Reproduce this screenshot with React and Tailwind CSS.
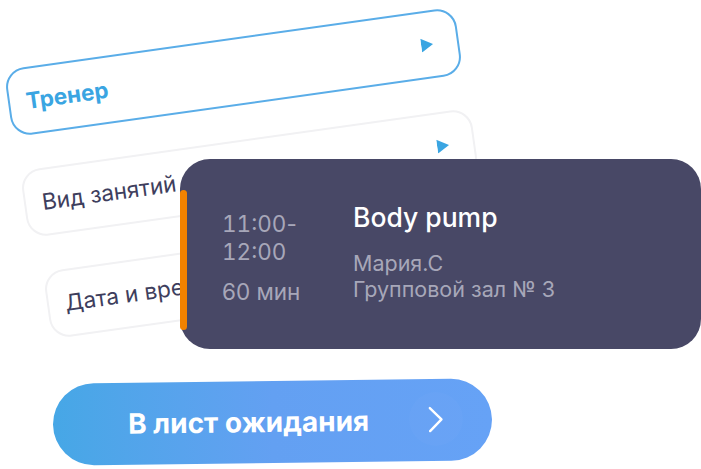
import React from 'react';

const filters = [
  { label: 'Тренер', active: true, ml: 'ml-[6px]' },
  { label: 'Вид занятий', active: false, ml: 'ml-[22px]' },
  { label: 'Дата и время', active: false, ml: 'ml-[45px]' },
];

const Triangle = () => (
  <svg width="12" height="14" viewBox="0 0 12 14" className="shrink-0">
    <path d="M0 0 L12 7 L0 14 Z" fill="#3aa5e2" />
  </svg>
);

const FilterCard = ({ label, active, ml }) => (
  <div
    className={`${ml} w-[455px] h-[68px] rotate-[-8deg] rounded-[20px] border-2 bg-white flex items-center justify-between pl-[16px] pr-[24px] ${
      active ? 'border-[#5aade8]' : 'border-[#f1f1f3]'
    }`}
  >
    <span
      className={
        active
          ? 'text-[22.5px] font-bold text-[#3aa5e2]'
          : 'text-[22.5px] font-normal text-[#3e3e5d]'
      }
    >
      {label}
    </span>
    <Triangle />
  </div>
);

const SessionCard = () => (
  <div className="absolute left-[180px] top-[159px] w-[521px] h-[190px] rounded-[30px] bg-[#484866]">
    <div className="absolute left-0 top-[31px] w-[7px] h-[140px] rounded-full bg-[#f28200]" />
    <div className="flex items-start pl-[42px] pt-[42px]">
      <div className="w-[131px] mt-[9px] text-[22.5px] text-[#a7a7b9]">
        <div className="leading-[28px]">
          <span className="tabular-nums">11:00</span>-
        </div>
        <div className="leading-[28px] tabular-nums">12:00</div>
        <div className="leading-[28px] mt-[12px]">60 мин</div>
      </div>
      <div>
        <div className="text-[26.5px] font-medium text-white leading-[32px]">Body pump</div>
        <div className="mt-[17px] text-[21.5px] text-[#a7a7b9] leading-[26px]">Мария.С</div>
        <div className="text-[21.5px] text-[#a7a7b9] leading-[26px]">Групповой зал № 3</div>
      </div>
    </div>
  </div>
);

export default function App() {
  return (
    <div
      className="relative w-[701px] h-[469px] bg-white overflow-hidden"
      style={{ fontFamily: 'Inter, "Noto Sans", sans-serif' }}
    >
      <div className="flex flex-col pt-[38px] gap-[33px]">
        {filters.map((f) => (
          <FilterCard key={f.label} {...f} />
        ))}
        <button className="relative ml-[53px] mt-[40px] w-[439px] h-[82px] rotate-[-0.7deg] rounded-full bg-gradient-to-r from-[#46a7e6] via-[#63a0f2] to-[#66a2f6] flex items-center pl-[75px]">
          <span className="text-[28px] font-bold text-white">В лист ожидания</span>
          <span className="absolute left-[356px] top-[13px] w-[54px] h-[54px] rounded-full bg-white/[0.02] flex items-center justify-center">
            <svg width="16" height="27" viewBox="0 0 16 27" fill="none">
              <path d="M2 2 L13.5 13.5 L2 25" stroke="white" strokeWidth="2.4" strokeLinecap="round" strokeLinejoin="round" />
            </svg>
          </span>
        </button>
      </div>
      <SessionCard />
    </div>
  );
}
